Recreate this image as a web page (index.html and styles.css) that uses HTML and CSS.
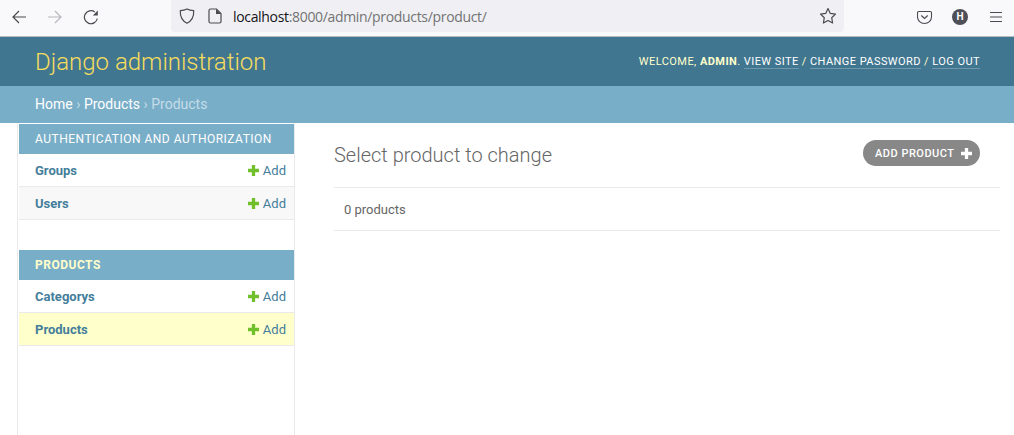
FILE: index.html
```html
<!DOCTYPE html>
<html lang="en">
<head>
<meta charset="utf-8">
<title>Select product to change | Django site admin</title>
<link rel="stylesheet" href="styles.css">
</head>
<body>
<div class="toolbar">
  <div class="nav-buttons">
    <svg class="tool" width="16" height="16" viewBox="0 0 16 16"><path d="M15 8H2M8 2 2 8l6 6" fill="none" stroke="#4a4a4f" stroke-width="1.2"/></svg>
    <svg class="tool" width="16" height="16" viewBox="0 0 16 16"><path d="M1 8h13M8 2l6 6-6 6" fill="none" stroke="#b8b8bc" stroke-width="1.2"/></svg>
    <svg class="tool" width="16" height="16" viewBox="0 0 16 16"><path d="M14.300 9.500A6.500 6.500 0 1 1 11.800 3" fill="none" stroke="#4a4a4f" stroke-width="1.200"/><path d="M14.800 1.500v5h-5z" fill="#4a4a4f"/></svg>
  </div>
  <div class="urlbar">
    <svg class="shield" width="16" height="16" viewBox="0 0 16 16"><path d="M8 1c2 1 4 1.500 6.700 1.700C15 8.500 12.800 12.800 8 15.200 3.200 12.800 1 8.500 1.300 2.700 4 2.500 6 2 8 1z" fill="none" stroke="#4a4a4f" stroke-width="1.200"/></svg>
    <svg class="page-icon" width="14" height="16" viewBox="0 0 14 16"><path d="M2.500 1h6L13 5.500V13.500a1.500 1.500 0 0 1-1.500 1.500h-9A1.500 1.500 0 0 1 1 13.500v-11A1.500 1.500 0 0 1 2.500 1z" fill="none" stroke="#4a4a4f" stroke-width="1.200"/><path d="M8 1v5h5z" fill="#4a4a4f"/></svg>
    <span class="url"><span class="host">localhost</span>:8000/admin/products/product/</span>
    <svg class="star" width="18" height="18" viewBox="0 0 18 18"><path d="M9 1.500l2.300 4.900 5.200.7-3.800 3.600.9 5.300L9 13.400l-4.600 2.600.9-5.300L1.500 7.100l5.200-.7z" fill="none" stroke="#4a4a4f" stroke-width="1.200" stroke-linejoin="round"/></svg>
  </div>
  <div class="tool-right">
    <svg width="16" height="16" viewBox="0 0 16 16"><path d="M1.800 2.500h11.400A1.300 1.300 0 0 1 14.500 3.800V8a7 6.500 0 0 1-14 0V3.800A1.300 1.300 0 0 1 1.800 2.500z" fill="none" stroke="#4a4a4f" stroke-width="1.100"/><path d="M4.300 6.500 7.500 9.500l3.200-3" fill="none" stroke="#4a4a4f" stroke-width="1.200"/></svg>
    <span class="avatar">H</span>
    <svg class="menu" width="14" height="12" viewBox="0 0 14 12"><path d="M1 1.500h12M1 6h12M1 10.500h12" stroke="#4a4a4f" stroke-width="1.200"/></svg>
  </div>
</div>
<header class="site-header">
  <div class="branding">Django administration</div>
  <div class="user-tools">WELCOME, <strong>ADMIN</strong>. <a>VIEW SITE</a> / <a>CHANGE PASSWORD</a> / <a>LOG OUT</a></div>
</header>
<nav class="breadcrumbs"><a>Home</a> <span class="sep">›</span> <a>Products</a> <span class="sep">›</span> Products</nav>
<div class="main">
  <aside class="sidebar">
    <section class="module">
      <h2 class="caption">AUTHENTICATION AND AUTHORIZATION</h2>
      <div class="row"><a class="model">Groups</a><a class="add"><svg class="plus" width="11" height="11" viewBox="0 0 10 10"><path d="M3.500 0h3v3.500H10v3H6.500V10h-3V6.500H0v-3h3.500z" fill="#70bf2b"/></svg>Add</a></div>
      <div class="row alt"><a class="model">Users</a><a class="add"><svg class="plus" width="11" height="11" viewBox="0 0 10 10"><path d="M3.500 0h3v3.500H10v3H6.500V10h-3V6.500H0v-3h3.500z" fill="#70bf2b"/></svg>Add</a></div>
    </section>
    <section class="module">
      <h2 class="caption current">PRODUCTS</h2>
      <div class="row"><a class="model">Categorys</a><a class="add"><svg class="plus" width="11" height="11" viewBox="0 0 10 10"><path d="M3.500 0h3v3.500H10v3H6.500V10h-3V6.500H0v-3h3.500z" fill="#70bf2b"/></svg>Add</a></div>
      <div class="row selected"><a class="model">Products</a><a class="add"><svg class="plus" width="11" height="11" viewBox="0 0 10 10"><path d="M3.500 0h3v3.500H10v3H6.500V10h-3V6.500H0v-3h3.500z" fill="#70bf2b"/></svg>Add</a></div>
    </section>
  </aside>
  <main class="content">
    <div class="title-row">
      <h1 class="title">Select product to change</h1>
      <a class="addlink">ADD PRODUCT<svg width="11" height="11" viewBox="0 0 10 10"><path d="M3.500 0h3v3.500H10v3H6.500V10h-3V6.500H0v-3h3.500z" fill="#fff"/></svg></a>
    </div>
    <p class="count">0 products</p>
  </main>
</div>
</body>
</html>
```
FILE: styles.css
```css
* { box-sizing: border-box; }
html, body { margin: 0; height: 100%; overflow: hidden; }
body {
  font-family: Roboto, "Liberation Sans", sans-serif;
  font-size: 14px;
  color: #333;
  background: #fff;
  display: flex;
  flex-direction: column;
}
.toolbar {
  height: 37px;
  flex: none;
  display: flex;
  background: #f9f9fb;
  border-bottom: 1px solid #b9b9bb;
  position: relative;
}
.nav-buttons {
  width: 171px;
  display: flex;
  align-items: center;
  padding: 0 0 3px 11px;
  gap: 20px;
}
.urlbar {
  width: 673px;
  height: 32px;
  background: #f0f0f4;
  border-radius: 0 0 4px 4px;
  display: flex;
  align-items: center;
  padding: 0 7px 0 8px;
}
.shield { margin-right: 13px; }
.page-icon { margin-right: 11px; }
.url {
  flex: 1;
  font-family: "Open Sans", "Noto Sans", sans-serif;
  font-size: 14px;
  color: #737373;
  letter-spacing: -0.33px;
}
.host { color: #15141a; }
.tool-right {
  flex: 1;
  display: flex;
  align-items: center;
  padding: 0 0 3px 73px;
  gap: 19px;
}
.menu { margin-left: 2px; }
.avatar {
  width: 16px;
  height: 16px;
  border-radius: 50%;
  background: #4f4f59;
  color: #fff;
  font-size: 10px;
  font-weight: 700;
  display: flex;
  align-items: center;
  justify-content: center;
}
.site-header {
  height: 49px;
  flex: none;
  background: #417690;
  display: flex;
  align-items: center;
  justify-content: space-between;
  padding: 0 34px 0 35px;
}
.branding {
  font-size: 24px;
  font-weight: 300;
  color: #f5dd5d;
}
.user-tools {
  font-size: 11px;
  letter-spacing: 0.44px;
  color: #ffc;
  font-weight: 400;
}
.user-tools strong { font-weight: 700; }
.user-tools a {
  color: #fff;
  border-bottom: 1px solid rgba(255, 255, 255, 0.25);
}
.breadcrumbs {
  height: 37px;
  flex: none;
  background: #79aec8;
  color: #c4dce8;
  padding: 0 35px;
  font-size: 14px;
  line-height: 36px;
}
.breadcrumbs a { color: #fff; }
.sep { font-size: 14px; }
.main {
  flex: 1;
  display: flex;
  margin-left: 17px;
  min-height: 0;
}
.sidebar {
  width: 278px;
  flex: none;
  border-left: 1px solid #eaeaea;
  border-right: 1px solid #eaeaea;
  padding: 1px 0 0 1px;
}
.module { margin-bottom: 30px; }
.caption {
  margin: 0;
  height: 30px;
  background: #79aec8;
  color: #fff;
  font-size: 12px;
  font-weight: 400;
  letter-spacing: 0.5px;
  line-height: 30px;
  padding-left: 16px;
}
.caption.current { color: #ffc; font-weight: 700; }
.row {
  height: 33px;
  display: flex;
  justify-content: space-between;
  align-items: center;
  padding: 1px 8px 0 16px;
  border-bottom: 1px solid #eaeaea;
  font-size: 13px;
  color: #447e9b;
}
.row.alt { background: #f8f8f8; }
.row.selected { background: #ffc; }
.model { font-weight: 700; }
.add { display: flex; align-items: center; }
.plus { margin-right: 4px; }
.content {
  flex: 1;
  padding: 0 14px 0 39px;
}
.title-row {
  height: 65px;
  display: flex;
  justify-content: space-between;
  align-items: flex-start;
  border-bottom: 1px solid #eaeaea;
  padding-right: 20px;
}
.title {
  margin: 20px 0 0;
  font-size: 20px;
  font-weight: 300;
  color: #666;
  line-height: 24px;
}
.addlink {
  margin-top: 17px;
  height: 26px;
  width: 117px;
  background: #888;
  border-radius: 13px;
  color: #fff;
  font-size: 11px;
  font-weight: 500;
  letter-spacing: 0.5px;
  display: flex;
  align-items: center;
  justify-content: space-between;
  padding: 0 8px 0 12px;
}
.count {
  margin: 0;
  height: 43px;
  padding-left: 10px;
  line-height: 43px;
  font-size: 13px;
  color: #666;
  border-bottom: 1px solid #eaeaea;
}
```
